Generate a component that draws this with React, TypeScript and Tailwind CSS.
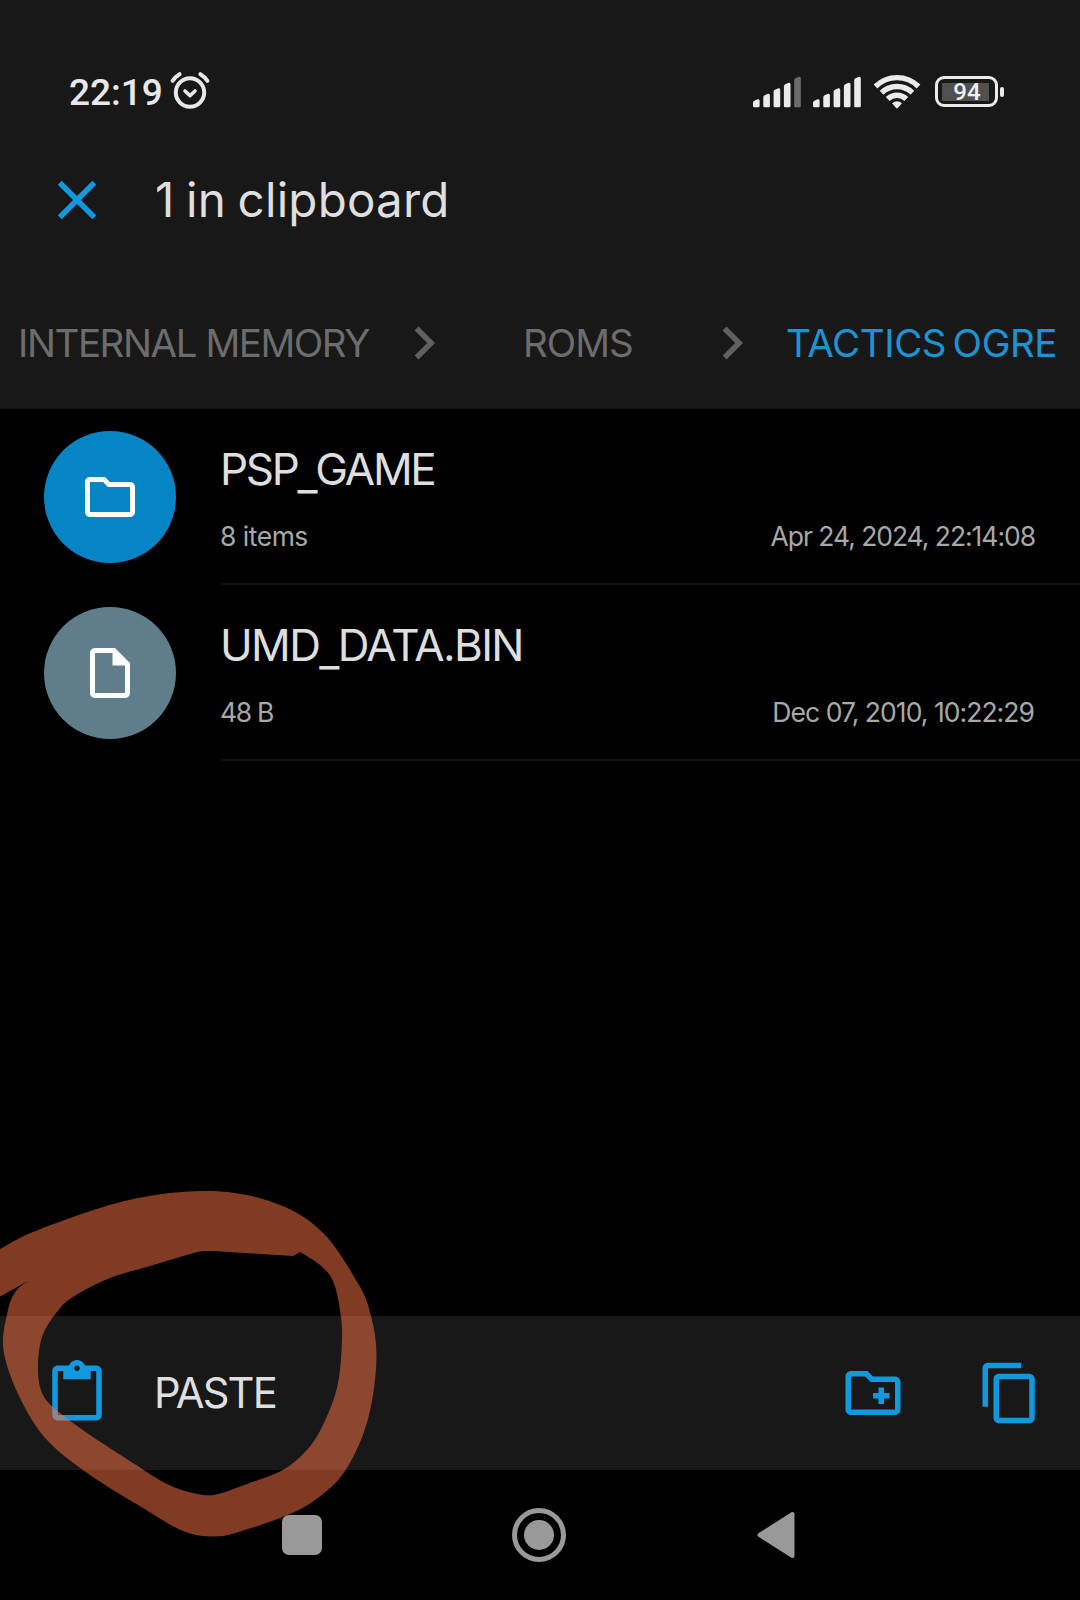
import React from "react";

type Point = [number, number];

const BLUE = "#1199e0";

const PATHS = {
  close:
    "M19 6.41L17.59 5 12 10.59 6.41 5 5 6.41 10.59 12 5 17.59 6.41 19 12 13.41 17.59 19 19 17.59 13.41 12z",
  chevron: "M10 6L8.59 7.41 13.17 12l-4.58 4.59L10 18l6-6z",
  folder:
    "M20 6h-8l-2-2H4c-1.1 0-2 .9-2 2v12c0 1.1.9 2 2 2h16c1.1 0 2-.9 2-2V8c0-1.1-.9-2-2-2zm0 12H4V6h5.17l2 2H20v10z",
  file: "M14 2H6c-1.1 0-2 .9-2 2v16c0 1.1.9 2 2 2h12c1.1 0 2-.9 2-2V8l-6-6zM6 20V4h7v5h5v11H6z",
  paste:
    "M19 2h-4.18C14.4.84 13.3 0 12 0c-1.3 0-2.4.84-2.82 2H5c-1.1 0-2 .9-2 2v16c0 1.1.9 2 2 2h14c1.1 0 2-.9 2-2V4c0-1.1-.9-2-2-2zm-7 0c.55 0 1 .45 1 1s-.45 1-1 1-1-.45-1-1 .45-1 1-1zm7 18H5V4h2v3h10V4h2v16z",
  newFolder:
    "M20 6h-8l-2-2H4c-1.1 0-2 .9-2 2v12c0 1.1.9 2 2 2h16c1.1 0 2-.9 2-2V8c0-1.1-.9-2-2-2zm0 12H4V6h5.17l2 2H20v10zM12 12h2v-2h2v2h2v2h-2v2h-2v-2h-2z",
  copy: "M16 1H4c-1.1 0-2 .9-2 2v14h2V3h12V1zm3 4H8c-1.1 0-2 .9-2 2v14c0 1.1.9 2 2 2h11c1.1 0 2-.9 2-2V7c0-1.1-.9-2-2-2zm0 16H8V7h11v14z",
};

function Icon({ d, size = 66, color = BLUE }: { d: string; size?: number; color?: string }) {
  return (
    <svg className="shrink-0" width={size} height={size} viewBox="0 0 24 24" fill={color} fillRule="evenodd">
      <path d={d} />
    </svg>
  );
}

function Signal({ dimLast = false }: { dimLast?: boolean }) {
  const tops = [23, 17.5, 12, 6.5, 0.5];
  return (
    <svg width="48" height="32" viewBox="0 0 48 32">
      {tops.map((top, i) => {
        const x = i * 10.3;
        return (
          <path
            key={top}
            d={`M${x} ${top + 4}Q${x} ${top + 2.4} ${x + 1.4} ${top + 1.8}L${x + 4.6} ${top + 0.3}Q${x + 6.6} ${top - 0.3} ${x + 6.6} ${top + 1.8}V30Q${x + 6.6} 31.3 ${x + 5.3} 31.3H${x + 1.3}Q${x} 31.3 ${x} 30Z`}
            fill={dimLast && i === 4 ? "#6c6c6c" : "#ebebeb"}
          />
        );
      })}
    </svg>
  );
}

function StatusBar() {
  return (
    <div className="flex h-[128px] items-center pt-[56px] pl-[69px] pr-[76px]">
      <span className="font-[Roboto,sans-serif] text-[37px] leading-none font-medium text-[#e8e8e8]">22:19</span>
      <svg className="-mt-[2px] ml-[6px]" width="42" height="40" viewBox="0 0 42 40" fill="none" stroke="#e8e8e8" strokeLinecap="round">
        <circle cx="21" cy="21.5" r="14.2" strokeWidth="4" />
        <path d="M16 20l5 4.6L26 20" strokeWidth="3.6" strokeLinejoin="round" />
        <path d="M3.6 9.8Q6.5 5.6 10.6 3.2M38.4 9.8Q35.5 5.6 31.4 3.2" strokeWidth="4" />
      </svg>
      <div className="ml-auto flex items-center">
        <Signal dimLast />
        <div className="w-[12px]" />
        <Signal />
        <svg className="-mt-[1px] ml-[12px]" width="48" height="36" viewBox="0 0 48 36" fill="none" stroke="#ebebeb" strokeWidth="5.4">
          <path d="M2.5 12.5A30.5 30.5 0 0 1 45.5 12.5" />
          <path d="M8.6 18.8A22 22 0 0 1 39.4 18.8" />
          <path d="M14.7 25A13.3 13.3 0 0 1 33.3 25" />
          <path d="M19 29.3Q24 25.3 29 29.3L24.8 34Q24 34.8 23.2 34Z" fill="#ebebeb" stroke="none" />
        </svg>
        <div className="-mt-[1px] ml-[14px] flex h-[31px] w-[63px] items-center rounded-[9px] border-[3px] border-[#ebebeb] p-[4px]">
          <div className="flex h-[18px] w-[47px] items-center justify-center bg-[#505050]">
            <span className="pl-[3px] font-[Roboto,sans-serif] text-[24px] leading-none font-medium text-[#f0f0f0]">94</span>
          </div>
        </div>
        <div className="-mt-[1px] ml-[2px] h-[10px] w-[4px] rounded-[2px] bg-[#ebebeb]" />
      </div>
    </div>
  );
}

function Underscore() {
  return <span className="inline-block translate-y-[5px]">_</span>;
}

function FileRow({
  icon,
  tint,
  name,
  detail,
  date,
}: {
  icon: string;
  tint: string;
  name: React.ReactNode;
  detail: React.ReactNode;
  date: React.ReactNode;
}) {
  return (
    <div className="flex h-[176px] pl-[44px]">
      <div className={`mt-[22px] flex h-[132px] w-[132px] shrink-0 items-center justify-center rounded-full ${tint}`}>
        <Icon d={icon} size={60} color="#ffffff" />
      </div>
      <div className="ml-[44px] flex-1 border-b-2 border-[#121212] pt-[30px] pr-[44px]">
        <div className="flex h-[60px] items-center text-[44px] text-[#dedede]">{name}</div>
        <div className="flex h-[75px] items-center justify-between text-[26.5px] text-[#a8a8a8]">
          {detail}
          {date}
        </div>
      </div>
    </div>
  );
}

/* Smooth open curve through the listed points. */
function curve(points: Point[]): string {
  let d = `M${points[0][0]} ${points[0][1]}`;
  for (let i = 0; i < points.length - 1; i++) {
    const a = points[Math.max(i - 1, 0)];
    const b = points[i];
    const c = points[i + 1];
    const e = points[Math.min(i + 2, points.length - 1)];
    d += `C${b[0] + (c[0] - a[0]) / 6} ${b[1] + (c[1] - a[1]) / 6} ${c[0] - (e[0] - b[0]) / 6} ${c[1] - (e[1] - b[1]) / 6} ${c[0]} ${c[1]}`;
  }
  return d;
}

const OUTER: Point[] = [
  [0, 79], [33, 62], [103, 37], [155, 25], [207, 21], [247, 25], [280, 35], [302, 46], [320, 60], [335, 77],
  [353, 105], [368, 135], [376.5, 185], [368, 249], [345, 301], [315, 330], [285, 346], [245, 360], [216, 366.5],
  [183, 361], [143, 338], [90, 305], [47, 270], [20, 228], [3.5, 180], [8, 140], [16, 121], [29, 110.5],
];

const INNER: Point[] = [
  [300, 82], [320, 95], [333, 111], [340, 140], [342, 170], [337, 218], [320, 261], [303, 284], [281, 301],
  [247, 314], [216, 324.5], [195, 323.5], [167, 314], [133, 293], [90, 265], [60, 243], [43, 225], [38, 200],
  [42, 167], [57, 142], [73, 127], [110, 108], [150, 96], [180, 87], [200, 81.5], [214, 81],
];

function MarkerLoop() {
  return (
    <svg className="pointer-events-none absolute top-[1170px] left-0" width="400" height="380" viewBox="0 0 400 380">
      <path
        d={`${curve(OUTER)}L0 126.5Z${curve(INNER)}L293 86Z`}
        fill="#ff7644"
        fillOpacity="0.5"
        fillRule="evenodd"
      />
    </svg>
  );
}

export default function App() {
  return (
    <div className="relative flex h-[1600px] w-[1080px] flex-col overflow-hidden bg-black font-[Inter,sans-serif] leading-none whitespace-nowrap">
      <header className="h-[409px] bg-[#181818]">
        <StatusBar />
        <div className="flex h-[144px] items-center pl-[44px]">
          <Icon d={PATHS.close} />
          <h1 className="ml-[45px] text-[47.5px] tracking-[0.2px] text-[#dfdfdf] [word-spacing:-2px]">1 in clipboard</h1>
        </div>
        <nav className="flex h-[137px] items-center pt-[4px] pl-[18px] text-[38.5px] text-[#6c6c6c]">
          <span className="w-[373px] pt-[2px] tracking-[-1.43px]">INTERNAL MEMORY</span>
          <Icon d={PATHS.chevron} color="#606060" />
          <span className="ml-[66px] w-[176px] pt-[2px] tracking-[-1px]">ROMS</span>
          <Icon d={PATHS.chevron} color="#606060" />
          <span className="ml-[21px] pt-[2px] tracking-[-0.4px] text-[#1c94d4] [word-spacing:-4px]">TACTICS OGRE</span>
        </nav>
      </header>

      <main className="flex-1">
        <FileRow
          icon={PATHS.folder}
          tint="bg-[#0585c4]"
          name={
            <span className="tracking-[-2.3px]">
              PSP
              <Underscore />
              GAME
            </span>
          }
          detail={<span className="tracking-[-0.5px]">8 items</span>}
          date={<span className="pr-px tracking-[-1.05px]">Apr 24, 2024, 22:14:08</span>}
        />
        <FileRow
          icon={PATHS.file}
          tint="bg-[#607d8b]"
          name={
            <span className="tracking-[-1.65px]">
              UMD
              <Underscore />
              DATA.BIN
            </span>
          }
          detail={<span className="tracking-[-1.3px]">48 B</span>}
          date={<span className="pr-[2px] tracking-[-0.95px]">Dec 07, 2010, 10:22:29</span>}
        />
      </main>

      <div className="flex h-[154px] items-center bg-[#181818] pr-[37px] pl-[44px]">
        <Icon d={PATHS.paste} />
        <span className="ml-[44px] origin-left scale-x-[0.97] pb-[2px] text-[43px] tracking-[-1.9px] text-[#dfdfdf]">PASTE</span>
        <div className="ml-auto flex gap-[71px]">
          <Icon d={PATHS.newFolder} />
          <Icon d={PATHS.copy} />
        </div>
      </div>

      <footer className="flex h-[130px] items-center justify-center pr-[2px]">
        <div className="flex w-[237px] justify-center">
          <div className="h-[40px] w-[40px] rounded-[7px] bg-[#999999]" />
        </div>
        <div className="flex w-[237px] justify-center">
          <div className="flex h-[54px] w-[54px] items-center justify-center rounded-full border-[5px] border-[#999999]">
            <div className="h-[30px] w-[30px] rounded-full bg-[#999999]" />
          </div>
        </div>
        <div className="flex w-[237px] justify-center">
          <svg width="38" height="48" viewBox="0 0 38 48">
            <path d="M2.5 24L35.5 3V45Z" fill="#999999" stroke="#999999" strokeWidth="4" strokeLinejoin="round" />
          </svg>
        </div>
      </footer>

      <MarkerLoop />
    </div>
  );
}
